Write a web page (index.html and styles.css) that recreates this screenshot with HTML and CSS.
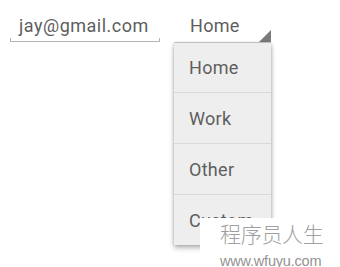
FILE: index.html
```html
<!DOCTYPE html>
<html>
<head>
<meta charset="utf-8">
<link rel="stylesheet" href="styles.css">
</head>
<body>
<div class="row">
  <div class="field">
    <span class="field-text">jay@gmail.com</span>
  </div>
  <div class="spinner">
    <span class="spinner-text">Home</span>
    <span class="arrow"></span>
    <ul class="menu">
      <li class="item first">Home</li>
      <li class="item">Work</li>
      <li class="item">Other</li>
      <li class="item last">Custom</li>
    </ul>
  </div>
</div>
<div class="watermark">
  <div class="wm-title">程序员人生</div>
  <div class="wm-url">www.wfuyu.com</div>
</div>
</body>
</html>
```

FILE: styles.css
```css
html, body {
  margin: 0;
  padding: 0;
  background: #ffffff;
  width: 340px;
  height: 267px;
  overflow: hidden;
}
body {
  font-family: Roboto, "Open Sans", sans-serif;
  color: #5e5e5e;
  position: relative;
}
.row {
  display: flex;
  align-items: flex-start;
  padding: 0 0 0 10px;
  gap: 14px;
}
.field {
  width: 150px;
  height: 42px;
  box-sizing: border-box;
  position: relative;
  padding: 14px 0 0 9px;
  border-bottom: 1px solid #b4b4b4;
}
.field::before, .field::after {
  content: "";
  position: absolute;
  bottom: 0;
  width: 1px;
  height: 3px;
  background: #b4b4b4;
}
.field::before { left: 0; }
.field::after { right: 0; }
.field-text {
  font-size: 18px;
  line-height: 24px;
  display: block;
  letter-spacing: 0.5px;
}
.spinner {
  width: 97px;
  height: 43px;
  box-sizing: border-box;
  position: relative;
  padding: 14px 0 0 16px;
  border-bottom: 1px solid #d0d0d0;
}
.spinner-text {
  font-size: 18px;
  line-height: 24px;
  display: block;
  letter-spacing: 0.3px;
}
.arrow {
  position: absolute;
  right: 0;
  bottom: 0;
  width: 0;
  height: 0;
  border-left: 12px solid transparent;
  border-bottom: 12px solid #7a7a7a;
}
.menu {
  position: absolute;
  left: 0;
  top: 43px;
  width: 97px;
  margin: 0;
  padding: 0;
  list-style: none;
  background: #eeeeee;
  box-shadow: 0 3px 5px rgba(0, 0, 0, 0.28), 1px 0 3px rgba(0, 0, 0, 0.12), -1px 0 2px rgba(0, 0, 0, 0.08);
  z-index: 2;
}
.item {
  height: 51px;
  box-sizing: border-box;
  border-bottom: 1px solid #d9d9d9;
  padding: 1px 0 0 15px;
  font-size: 18px;
  line-height: 49px;
  letter-spacing: 0.3px;
}
.item.first {
  height: 50px;
  line-height: 48px;
}
.item.last {
  border-bottom: none;
  height: 50px;
}
.watermark {
  position: absolute;
  left: 200px;
  top: 218px;
  width: 140px;
  height: 49px;
  background: #ffffff;
  z-index: 3;
  box-sizing: border-box;
  padding-left: 20px;
}
.wm-title {
  font-family: "Noto Sans CJK SC", sans-serif;
  font-weight: 300;
  font-size: 21px;
  line-height: 30px;
  color: #a0a0a0;
  letter-spacing: -0.3px;
}
.wm-url {
  font-family: "Liberation Sans", Arial, sans-serif;
  font-size: 14.5px;
  line-height: 20px;
  color: #939393;
  letter-spacing: -0.2px;
  margin-top: 3px;
}
```
